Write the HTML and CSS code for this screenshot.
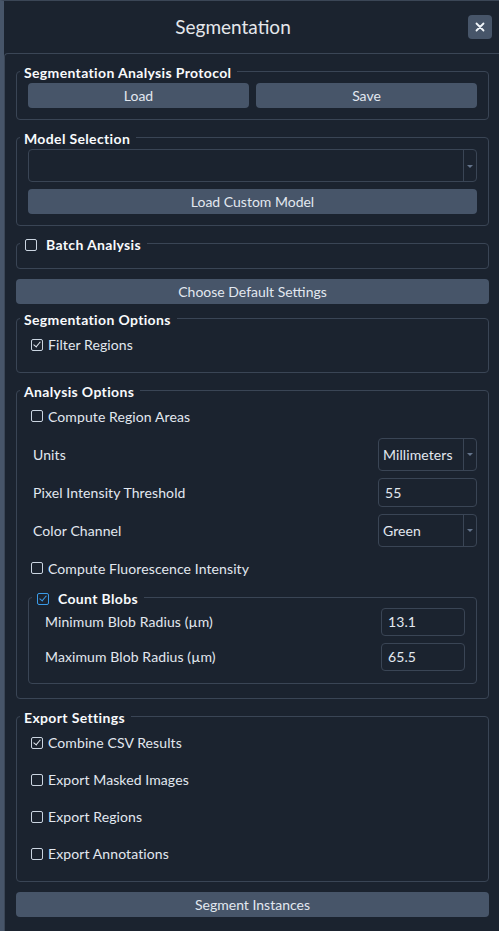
FILE: index.html
```html
<!DOCTYPE html>
<html lang="en">
<head>
  <meta charset="UTF-8" />
  <meta name="viewport" content="width=device-width, initial-scale=1.0"/>
  <title>Segmentation</title>
  <link rel="stylesheet" href="styles.css">
</head>
<body>

  <div class="panel">
    <header class="panel-header">
      <h1>Segmentation</h1>
      <button class="close-btn" aria-label="Close">
        <svg width="10" height="10" viewBox="0 0 10 10"><path d="M1.5 1.5 L8.5 8.5 M8.5 1.5 L1.5 8.5" stroke="#f1f5f9" stroke-width="1.8" stroke-linecap="round"/></svg>
      </button>
    </header>

    <div class="panel-body">

      <!-- protocol -->
      <fieldset class="group">
        <legend>Segmentation Analysis Protocol</legend>
        <div class="btn-row">
          <button class="btn">Load</button>
          <button class="btn">Save</button>
        </div>
      </fieldset>

      <!-- model -->
      <fieldset class="group">
        <legend>Model Selection</legend>
        <div class="select select-wide"><span class="select-value"></span><span class="select-arrow"></span></div>
        <button class="btn btn-block btn-model">Load Custom Model</button>
      </fieldset>

      <fieldset class="group group-batch">
        <legend><span class="check"></span>Batch Analysis</legend>
      </fieldset>

      <button class="btn btn-block btn-defaults">Choose Default Settings</button>

      <fieldset class="group group-tight group-seg">
        <legend>Segmentation Options</legend>
        <div class="check-row"><span class="check checked"></span>Filter Regions</div>
      </fieldset>

      <!-- analysis -->
      <fieldset class="group group-analysis">
        <legend>Analysis Options</legend>
        <div class="rows">
          <div class="check-row tall"><span class="check"></span>Compute Region Areas</div>
          <div class="field-row">
            <span class="field-label">Units</span>
            <div class="select select-small"><span class="select-value">Millimeters</span><span class="select-arrow"></span></div>
          </div>
          <div class="field-row">
            <span class="field-label">Pixel Intensity Threshold</span>
            <div class="text-input">55</div>
          </div>
          <div class="field-row">
            <span class="field-label">Color Channel</span>
            <div class="select select-small"><span class="select-value">Green</span><span class="select-arrow"></span></div>
          </div>
          <div class="check-row tall"><span class="check"></span>Compute Fluorescence Intensity</div>
        </div>

        <fieldset class="group group-nested">
          <legend><span class="check checked blue"></span>Count Blobs</legend>
          <div class="field-row short">
            <span class="field-label">Minimum Blob Radius (µm)</span>
            <div class="text-input text-input-small">13.1</div>
          </div>
          <div class="field-row short">
            <span class="field-label">Maximum Blob Radius (µm)</span>
            <div class="text-input text-input-small">65.5</div>
          </div>
        </fieldset>
      </fieldset>

      <!-- export -->
      <fieldset class="group group-tight">
        <legend>Export Settings</legend>
        <div class="check-row"><span class="check checked"></span>Combine CSV Results</div>
        <div class="check-row"><span class="check"></span>Export Masked Images</div>
        <div class="check-row"><span class="check"></span>Export Regions</div>
        <div class="check-row"><span class="check"></span>Export Annotations</div>
      </fieldset>

      <button class="btn btn-block btn-segment">Segment Instances</button>
    </div>
  </div>

</body>
</html>
```

FILE: styles.css
```css
/* --- page --- */
body {
  margin: 0;
  background-color: #1b232f;
  font-family: "Lato", "Noto Sans", sans-serif;
  font-size: 14px;
  color: #e2e8f0;
  -webkit-font-smoothing: antialiased;
}

.panel {
  min-height: 931px;
  box-sizing: border-box;
  border-left: 4px solid #475569;
  border-top: 1px solid #3b4656;
}

/* --- header --- */
.panel-header {
  height: 52px;
  display: flex;
  align-items: center;
}

.panel-header h1 {
  flex: 1;
  margin: 0;
  text-align: center;
  font-size: 19px;
  font-weight: 400;
  color: #e5e7eb;
  padding-bottom: 2px;
}

.close-btn {
  width: 24px;
  height: 24px;
  margin: 0 7px 0 6px;
  padding: 0;
  border: none;
  border-radius: 4px;
  background-color: #475569;
  display: flex;
  align-items: center;
  justify-content: center;
}

.panel-body {
  border-top: 1px solid #3b4656;
  border-left: 1px solid #3b4656;
  border-top-left-radius: 4px;
  padding: 0 10px 14px 11px;
}

/* --- groups --- */
.group {
  margin: 6px 0 0;
  padding: 1px 11px 11px;
  border: 1px solid #3a4555;
  border-radius: 4px;
  min-width: 0;
}

/* legend box is 22px tall, border runs through its middle,
   text sits ~2px below the line */
.group legend {
  margin-left: -8px;
  padding: 4px 6px 0 4px;
  font-weight: 700;
  line-height: 18px;
  letter-spacing: 0.35px;
  color: #f8fafc;
  display: flex;
  align-items: center;
}

.group legend .check {
  margin: 0 9px 0 1px;
}

.group-batch {
  padding: 0 11px 14px;
}

.group-tight {
  padding: 0 11px 9px;
}
.group-tight .check-row:first-of-type {
  margin-top: -3px;
}

.group-seg {
  margin-top: 3px;
}

.group-analysis {
  padding: 0 11px 14px;
}

.group-nested {
  margin-top: -1px;
  padding: 0 11px 9px;
}
.group-nested .field-row:first-of-type {
  margin-top: -4px;
}

.rows {
  margin-top: -4px;
}

/* --- buttons --- */
.btn {
  height: 25px;
  border: none;
  border-radius: 4px;
  background-color: #475569;
  color: #e2e8f0;
  font-family: inherit;
  font-size: 14px;
  padding: 0;
}

.btn-row {
  display: flex;
  gap: 7px;
}
.btn-row .btn {
  flex: 1;
}

.btn-block {
  display: block;
  width: 100%;
}

.btn-model {
  margin-top: 7px;
}

.btn-defaults,
.btn-segment {
  margin-top: 10px;
}

/* --- checkboxes --- */
.check {
  width: 12px;
  height: 12px;
  box-sizing: border-box;
  border: 1px solid #cbd5e1;
  border-radius: 2px;
  flex-shrink: 0;
  position: relative;
}

.check.checked::after {
  content: '';
  position: absolute;
  left: 3px;
  top: 0px;
  width: 3px;
  height: 6px;
  border: solid #e2e8f0;
  border-width: 0 1.5px 1.5px 0;
  transform: rotate(40deg);
}

.check.blue {
  border-color: #3b9be8;
}
.check.blue::after {
  border-color: #3b9be8;
}

.check-row {
  height: 37px;
  display: flex;
  align-items: center;
  padding-left: 3px;
  letter-spacing: 0.1px;
}
.check-row .check {
  margin-right: 5px;
}
.check-row.tall {
  height: 38px;
}

/* --- label + control rows --- */
.field-row {
  height: 38px;
  display: flex;
  align-items: center;
  justify-content: space-between;
  padding-left: 5px;
  letter-spacing: 0.1px;
}
.field-row.short {
  height: 35px;
}

.select {
  height: 33px;
  box-sizing: border-box;
  border: 1px solid #3a4555;
  border-radius: 4px;
  display: flex;
  align-items: stretch;
}
.select-wide {
  width: 100%;
}
.select-small {
  width: 99px;
}

.select-value {
  flex: 1;
  display: flex;
  align-items: center;
  padding-left: 4px;
}

.select-arrow {
  width: 12px;
  border-left: 1px solid #3a4555;
  position: relative;
}
.select-arrow::after {
  content: '';
  position: absolute;
  left: 3px;
  top: 50%;
  margin-top: -1px;
  border-left: 3px solid transparent;
  border-right: 3px solid transparent;
  border-top: 3px solid #64748b;
}

.text-input {
  width: 99px;
  height: 29px;
  box-sizing: border-box;
  border: 1px solid #3a4555;
  border-radius: 4px;
  display: flex;
  align-items: center;
  padding-left: 6px;
}
.text-input-small {
  width: 84px;
  height: 28px;
}
```
